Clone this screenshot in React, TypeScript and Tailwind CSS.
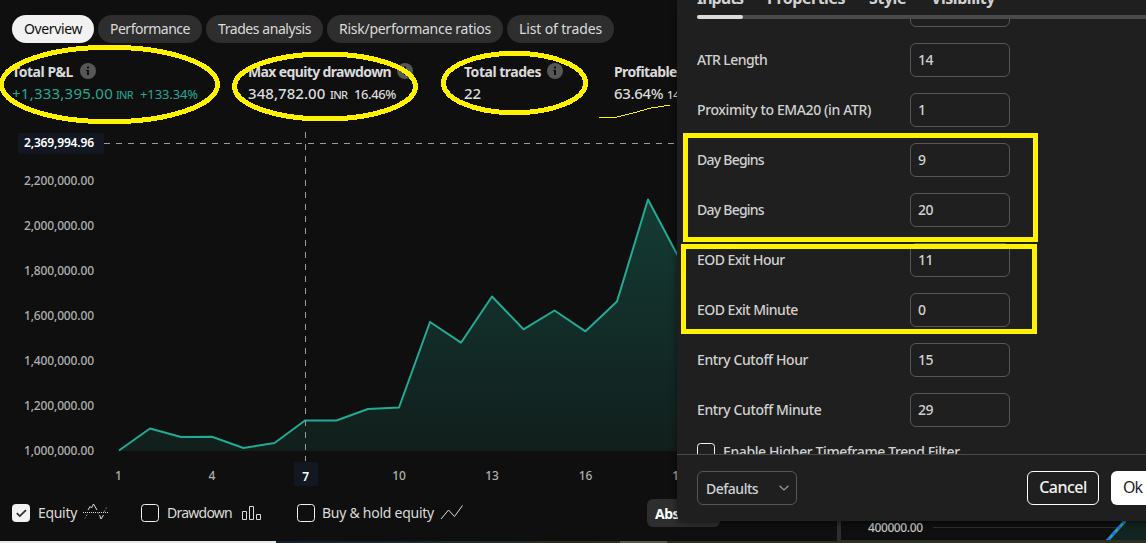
import type { ReactNode } from "react";

const tabs = [
  { label: "Overview", cls: "w-[82px] bg-[#f2f2f2] text-[#0f0f0f] tracking-[-0.38px]" },
  { label: "Performance", cls: "w-[104px] bg-[#2e2e2e] text-[#dbdbdb] tracking-[-0.49px]" },
  { label: "Trades analysis", cls: "w-[117px] bg-[#2e2e2e] text-[#dbdbdb] tracking-[-0.43px]" },
  { label: "Risk/performance ratios", cls: "w-[176px] bg-[#2e2e2e] text-[#dbdbdb] tracking-[-0.27px]" },
  { label: "List of trades", cls: "w-[107px] bg-[#2e2e2e] text-[#dbdbdb] tracking-[-0.14px]" },
];

function Info() {
  return (
    <svg className="size-4 shrink-0" viewBox="0 0 16 16">
      <circle cx="8" cy="8" r="8" fill="#575757" />
      <path d="M7 3.5h2v2H7zM6 7h3v5H7V8H6z" fill="#0f0f0f" />
    </svg>
  );
}

function Metric({ width, title, titleCls, infoGap, children }: { width: string; title: string; titleCls: string; infoGap: string; children: ReactNode }) {
  return (
    <div className={`shrink-0 ${width}`}>
      <div className={`flex h-5 items-center ${infoGap}`}>
        <span className={`text-[14px] font-bold text-[#dbdbdb] ${titleCls}`}>{title}</span>
        <Info />
      </div>
      <div className="mt-[1px] flex h-6 items-baseline">{children}</div>
    </div>
  );
}

const equity: [number, number][] = [
  [119, 450.5], [150, 428.5], [181, 437], [212, 436.7], [243.5, 448], [274.5, 443], [305, 420.5], [336.5, 420.5],
  [368, 409], [399, 407.5], [430, 322], [461, 342.7], [492, 296.5], [523.5, 329.3], [554.5, 310.5], [585.5, 331.3],
  [617, 301.5], [648, 199.5], [679, 258],
];
const linePath = equity.map(([x, y], i) => `${i ? "L" : "M"}${x} ${y}`).join("");

const yTicks: [string, number][] = [
  ["2,200,000.00", 185], ["2,000,000.00", 230], ["1,800,000.00", 275], ["1,600,000.00", 320],
  ["1,400,000.00", 365], ["1,200,000.00", 410], ["1,000,000.00", 455],
];
const xTicks: [string, number][] = [["1", 118.5], ["4", 212], ["10", 399], ["13", 492], ["16", 585.5], ["19", 679]];

function EquityChart() {
  return (
    <svg className="block shrink-0" width="700" height="367" viewBox="0 128 700 367" fontFamily="'Noto Sans', sans-serif" fontSize="12" fontWeight="500">
      <defs>
        <linearGradient id="area" gradientUnits="userSpaceOnUse" x1="0" y1="199" x2="0" y2="451">
          <stop offset="0" stopColor="#22ab94" stopOpacity="0.28" />
          <stop offset="1" stopColor="#22ab94" stopOpacity="0.1" />
        </linearGradient>
      </defs>
      <path d={`${linePath}V451H119Z`} fill="url(#area)" />
      <path d={linePath} fill="none" stroke="#22ab94" strokeWidth="2" strokeLinejoin="round" />
      <path d="M104 143.5H677M305.5 132V461" stroke="#9c9c9c" strokeDasharray="6 6" fill="none" />
      <rect x="18" y="133" width="86" height="21" rx="2" fill="#131722" />
      <text x="24" y="147" fill="#fff" fontWeight="600" textLength="70">2,369,994.96</text>
      {yTicks.map(([t, y]) => (
        <text key={t} x="24" y={y} fill="#b0b0b0" textLength="70">{t}</text>
      ))}
      {xTicks.map(([t, x]) => (
        <text key={t} x={x} y="480" fill="#b0b0b0" textAnchor="middle">{t}</text>
      ))}
      <rect x="294" y="462" width="24" height="24" rx="1" fill="#131722" />
      <text x="305.7" y="481" fill="#fff" fontWeight="600" textAnchor="middle">7</text>
    </svg>
  );
}

function Check({ on = false }: { on?: boolean }) {
  return (
    <svg className="size-[18px] shrink-0" viewBox="0 0 18 18" fill="none">
      <rect x="0.5" y="0.5" width="17" height="17" rx="3" fill={on ? "#f2f2f2" : "none"} stroke="#f2f2f2" />
      {on && <path d="M4.8 9.2l3 2.9L14 6.2" stroke="#2e2e2e" strokeWidth="1.8" />}
    </svg>
  );
}

const fields = [
  { label: "ATR Length", value: "14", cls: "tracking-[-0.55px]" },
  { label: "Proximity to EMA20 (in ATR)", value: "1", cls: "tracking-[-0.38px]" },
  { label: "Day Begins", value: "9", cls: "tracking-[-0.76px]" },
  { label: "Day Begins", value: "20", cls: "tracking-[-0.76px]" },
  { label: "EOD Exit Hour", value: "11", cls: "tracking-[-0.54px]" },
  { label: "EOD Exit Minute", value: "0", cls: "tracking-[-0.51px]" },
  { label: "Entry Cutoff Hour", value: "15", cls: "tracking-[-0.40px]" },
  { label: "Entry Cutoff Minute", value: "29", cls: "tracking-[-0.39px]" },
];

function Dialog() {
  return (
    <section className="absolute left-[677px] top-0 flex h-[521px] w-[480px] flex-col rounded-bl-md bg-[#1f1f1f] text-[#d1d1d1] shadow-[0_2px_6px_rgba(0,0,0,0.5)]">
      <header className="relative h-[19px] shrink-0 overflow-hidden pl-5">
        <nav className="-mt-[14px] flex h-6 items-center text-[16px] font-bold">
          <span className="w-[70px] tracking-[-1px]">Inputs</span>
          <span className="w-[102px] tracking-[-0.49px]">Properties</span>
          <span className="w-[62px] tracking-[-0.44px]">Style</span>
          <span className="tracking-[-0.45px]">Visibility</span>
        </nav>
        <div className="mt-[5px] h-1 rounded-l-full bg-[#4a4a4a]">
          <div className="h-1 w-[46px] rounded-full bg-[#dbdbdb]" />
        </div>
      </header>
      <div className="h-[435px] shrink-0 overflow-hidden pl-5 text-[14px] font-medium">
        <div className="-mt-[26px] mb-4 ml-[213px] h-[34px] w-[100px] rounded-md border border-[#575757]" />
        <div className="flex flex-col gap-4">
          {fields.map((f, i) => (
            <label key={i} className="flex h-[34px] items-center">
              <span className={`w-[213px] pb-[2px] ${f.cls}`}>{f.label}</span>
              <span className="flex h-[34px] w-[100px] items-center rounded-md border border-[#575757] pb-[2px] pl-[7px] tracking-[-0.5px]">{f.value}</span>
            </label>
          ))}
        </div>
        <label className="mt-4 flex items-start gap-2">
          <Check />
          <span className="leading-[18px] tracking-[-0.39px]">Enable Higher Timeframe Trend Filter</span>
        </label>
      </div>
      <footer className="flex h-[67px] shrink-0 items-center border-t border-[#4a4a4a] pl-5">
        <button className="flex h-[34px] w-[100px] shrink-0 items-center justify-between rounded-md border border-[#575757] pl-2 pr-[7px] text-[14px] font-medium tracking-[-0.48px]">
          Defaults
          <svg width="10" height="6" viewBox="0 0 10 6" fill="none" stroke="#9c9c9c" strokeWidth="1.2"><path d="M.5.7L5 5 9.500.7" /></svg>
        </button>
        <button className="ml-[230px] h-[34px] w-[72px] shrink-0 rounded-md border border-white pb-[2px] text-[16px] font-medium tracking-[-0.5px] text-[#f2f2f2]">Cancel</button>
        <button className="ml-3 h-[34px] w-[60px] shrink-0 rounded-md bg-white pb-[2px] pl-[12px] text-left text-[16px] tracking-[-1px] text-[#1f1f1f]">Ok</button>
      </footer>
    </section>
  );
}

function Annotations() {
  return (
    <svg className="pointer-events-none absolute inset-0" width="1146" height="543" fill="none" stroke="#fff200" strokeWidth="5" shapeRendering="crispEdges">
      <ellipse cx="109.500" cy="84.500" rx="108" ry="37.200" />
      <ellipse cx="325" cy="86.500" rx="90.500" ry="32.500" />
      <ellipse cx="514.500" cy="83" rx="71" ry="29.700" />
      <path d="M599 117.500h16l6-1.500 14-3.500 16-4.500 10-1.500 9-1.500" strokeWidth="1" />
      <rect x="685.500" y="135.500" width="350" height="104" />
      <rect x="683.500" y="246.500" width="351" height="85" />
    </svg>
  );
}

export default function App() {
  return (
    <main className="relative flex h-[543px] w-[1146px] flex-col overflow-hidden whitespace-nowrap bg-[#0f0f0f] font-['Noto_Sans',sans-serif] text-[#dbdbdb]">
      <div className="flex h-[541px] shrink-0">
        <div className="flex w-[837px] flex-col overflow-hidden">
          <nav className="flex h-[61px] shrink-0 gap-1 pl-3 pt-[15px] text-[14px]">
            {tabs.map((t) => (
              <button key={t.label} className={`h-7 shrink-0 rounded-full pb-[2px] ${t.cls}`}>{t.label}</button>
            ))}
          </nav>
          <div className="flex h-[67px] shrink-0 pl-3">
            <Metric width="w-[236px]" title="Total P&L" titleCls="w-[62px] tracking-[-0.45px]" infoGap="gap-[6px]">
              <span className="w-[104px] text-[15px] tracking-[0.24px] text-[#22ab94]">+1,333,395.00</span>
              <span className="w-[24px] text-[11px] tracking-[-0.65px] text-[#22ab94]">INR</span>
              <span className="text-[13px] tracking-[-0.11px] text-[#22ab94]">+133.34%</span>
            </Metric>
            <Metric width="w-[216px]" title="Max equity drawdown" titleCls="w-[144px] tracking-[-0.64px]" infoGap="gap-[5px]">
              <span className="w-[82px] text-[15px] font-medium tracking-[0.05px]">348,782.00</span>
              <span className="w-[24px] text-[11px] font-medium tracking-[-0.75px]">INR</span>
              <span className="text-[13px] font-medium tracking-[-0.4px]">16.46%</span>
            </Metric>
            <Metric width="w-[150px]" title="Total trades" titleCls="w-[77px] tracking-[-0.48px]" infoGap="gap-[6px]">
              <span className="text-[15px] font-medium">22</span>
            </Metric>
            <Metric width="w-[160px]" title="Profitable trades" titleCls="w-[107px] tracking-[-0.6px]" infoGap="gap-[6px]">
              <span className="w-[53px] text-[15px] font-medium tracking-[-0.35px]">63.64%</span>
              <span className="text-[11px] font-medium">14/22</span>
            </Metric>
          </div>
          <EquityChart />
          <div className="flex h-9 shrink-0 items-center pl-3 text-[14px]">
            <Check on />
            <span className="ml-2 w-[45px] pb-[1px] tracking-[-0.31px]">Equity</span>
            <svg width="26" height="18" viewBox="0 0 26 18" fill="none" stroke="#dbdbdb">
              <path d="M0 8.500H25" strokeDasharray="1 1" />
              <path d="M5 6l2-3.500L8.500 4l2-4 3.500 6M16.500 11l1.500 4 2.500-4" />
              <path d="M4 10.500l-2 4M14.500 8l2 3.500M21 8l2.500-4.500" strokeDasharray="2 1.500" stroke="#8a8a8a" />
            </svg>
            <span className="w-[32px]" />
            <Check />
            <span className="ml-2 w-[74px] pb-[1px] tracking-[-0.76px]">Drawdown</span>
            <svg width="20" height="15" viewBox="0 0 20 15" fill="none" stroke="#dbdbdb">
              <path d="M1.500 5.500h4v8h-4zM8.500.5h4v13h-4zM15.500 8.500h4v5h-4z" />
            </svg>
            <span className="w-[36px]" />
            <Check />
            <span className="ml-[7px] w-[118px] pb-[1px] tracking-[-0.26px]">Buy &amp; hold equity</span>
            <svg width="24" height="16" viewBox="0 0 24 16" fill="none" stroke="#dbdbdb">
              <path d="M1 14l7.500-9 6 6.500L22.500.5" />
            </svg>
            <div className="ml-[183px] flex h-7 w-[73px] items-center rounded-md bg-[#2e2e2e] pl-2 text-[14px] font-bold tracking-[-0.5px] text-white">Absolute</div>
          </div>
        </div>
        <div className="w-1 bg-[#2e2e2e]" />
        <div className="flex w-[305px] items-end">
          <svg width="305" height="21" viewBox="841 520 305 21" fontFamily="'Noto Sans', sans-serif" fontSize="12" fontWeight="500">
            <path d="M933 527.500H1146" stroke="#2e2e2e" />
            <path d="M1108 541l18-20h20v20z" fill="#12241f" />
            <text x="868" y="531.500" fill="#c4c4c4" textLength="55">400000.00</text>
            <path d="M1107 541l18-20" stroke="#22ab94" strokeWidth="3" />
            <path d="M1107 541l18-20" stroke="#2962ff" strokeWidth="3" strokeDasharray="4 4" />
            <path d="M841 540.500H1146" stroke="#2e2e2e" />
          </svg>
        </div>
      </div>
      <div className="flex h-[2px] shrink-0">
        <div className="w-[276px] bg-[#e8e8e8]" />
        <div className="w-[344px] bg-gradient-to-r from-[#17202e] to-[#2b2f20]" />
        <div className="w-[47px] bg-[#55564c]" />
        <div className="flex-1 bg-[#2b3020]" />
      </div>
      <Dialog />
      <Annotations />
    </main>
  );
}
